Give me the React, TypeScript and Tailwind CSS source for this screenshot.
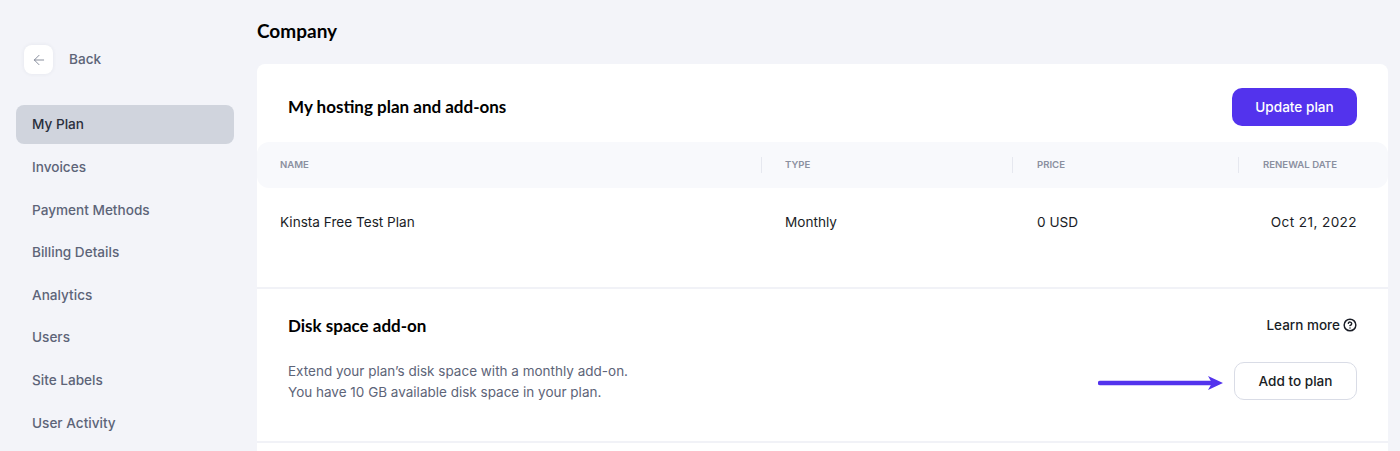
import { ArrowLeft, CircleHelp } from "lucide-react";

const navItems = ["My Plan", "Invoices", "Payment Methods", "Billing Details", "Analytics", "Users", "Site Labels", "User Activity"];

const inter = "font-['Inter',sans-serif]";
const heading = "font-['Lato',sans-serif] font-bold text-black";

function Sidebar() {
  return (
    <aside className="w-[257px] shrink-0 pl-4 pt-[45px]">
      <div className="ml-2 flex items-center gap-4">
        <button className="grid h-[29px] w-[29px] place-items-center rounded-lg bg-white shadow-[0_0_4px_rgba(40,50,90,0.07)]">
          <ArrowLeft className="h-4 w-4 text-[#71788a]" strokeWidth={1.25} />
        </button>
        <span className="text-[13.6px] font-medium text-[#5d6478]">Back</span>
      </div>
      <nav className="mt-[31px] flex w-[218px] flex-col gap-1">
        {navItems.map((item, index) => (
          <a
            key={item}
            className={
              index === 0
                ? "flex h-[39px] items-center rounded-lg bg-[#d0d4dd] px-4 text-[13.6px] font-medium text-[#2a2f3c]"
                : "flex h-[38.6px] items-center rounded-lg px-4 text-[13.6px] font-medium text-[#5d6478]"
            }
          >
            {item}
          </a>
        ))}
      </nav>
    </aside>
  );
}

function PlanTable() {
  return (
    <div>
      <div className="grid h-[46px] grid-cols-[504px_251px_226px_1fr] items-center rounded-xl bg-[#f8f9fc] text-[9.6px] font-semibold text-[#8b90a0]">
        <div className="pl-[23px]">NAME</div>
        <div className="border-l border-[#e6e8ef] pl-[23px] leading-[16px]">TYPE</div>
        <div className="border-l border-[#e6e8ef] pl-6 leading-[16px]">PRICE</div>
        <div className="border-l border-[#e6e8ef] pl-6 leading-[16px]">RENEWAL DATE</div>
      </div>
      <div className="grid h-[68px] grid-cols-[504px_251px_226px_1fr] items-center text-[13.6px] text-[#1a1d26]">
        <div className="pl-[23px]">Kinsta Free Test Plan</div>
        <div className="pl-6">Monthly</div>
        <div className="pl-[25px]">0 USD</div>
        <div className="pr-[31px] text-right tracking-[0.4px]">Oct 21, 2022</div>
      </div>
    </div>
  );
}

function Arrow() {
  return (
    <svg className="mt-[4px]" width="126" height="16" viewBox="0 0 126 16" fill="none">
      <path d="M2 8H114" stroke="#5333ed" strokeWidth="4.5" strokeLinecap="round" />
      <path d="M110 1L125 8L110 15L114 8Z" fill="#5333ed" />
    </svg>
  );
}

export default function App() {
  return (
    <div className={`flex h-[451px] w-[1400px] overflow-hidden bg-[#f3f4f9] ${inter}`}>
      <Sidebar />
      <main className="w-[1131px] shrink-0">
        <h1 className={`flex h-[64px] items-center pb-[2px] text-[19px] ${heading}`}>Company</h1>
        <div className="rounded-t-lg bg-white pb-10">
          <div className="flex h-[78px] items-center justify-between px-[31px] pt-2">
            <h2 className={`text-[17px] ${heading}`}>My hosting plan and add-ons</h2>
            <button className="h-[38px] w-[125px] rounded-[10px] bg-[#5333ed] text-[13.6px] font-medium text-white">Update plan</button>
          </div>
          <PlanTable />
          <div className="mt-[31px] border-t-2 border-[#f1f2f7] px-[31px] pb-[38px] pt-[25px]">
            <div className="flex items-center justify-between">
              <h2 className={`text-[17px] leading-[24px] ${heading}`}>Disk space add-on</h2>
              <a className="flex items-center gap-[3px] pb-[2px] text-[13.5px] font-medium text-[#1a1d26]">
                Learn more
                <CircleHelp className="h-[14px] w-[14px]" strokeWidth={2.5} />
              </a>
            </div>
            <div className="mt-[23px] flex items-center justify-between">
              <p className="text-[13.5px] leading-[21px] text-[#5d6478]">
                Extend your plan’s disk space with a monthly add-on.
                <br />
                You have 10 GB available disk space in your plan.
              </p>
              <div className="mb-[2px] flex items-center gap-[10px]">
                <Arrow />
                <button className="h-[38px] w-[123px] rounded-[10px] border border-[#d9dce6] bg-white text-[13.6px] font-medium text-[#1a1d26]">Add to plan</button>
              </div>
            </div>
          </div>
          <div className="border-t-2 border-[#f1f2f7]" />
        </div>
      </main>
    </div>
  );
}
